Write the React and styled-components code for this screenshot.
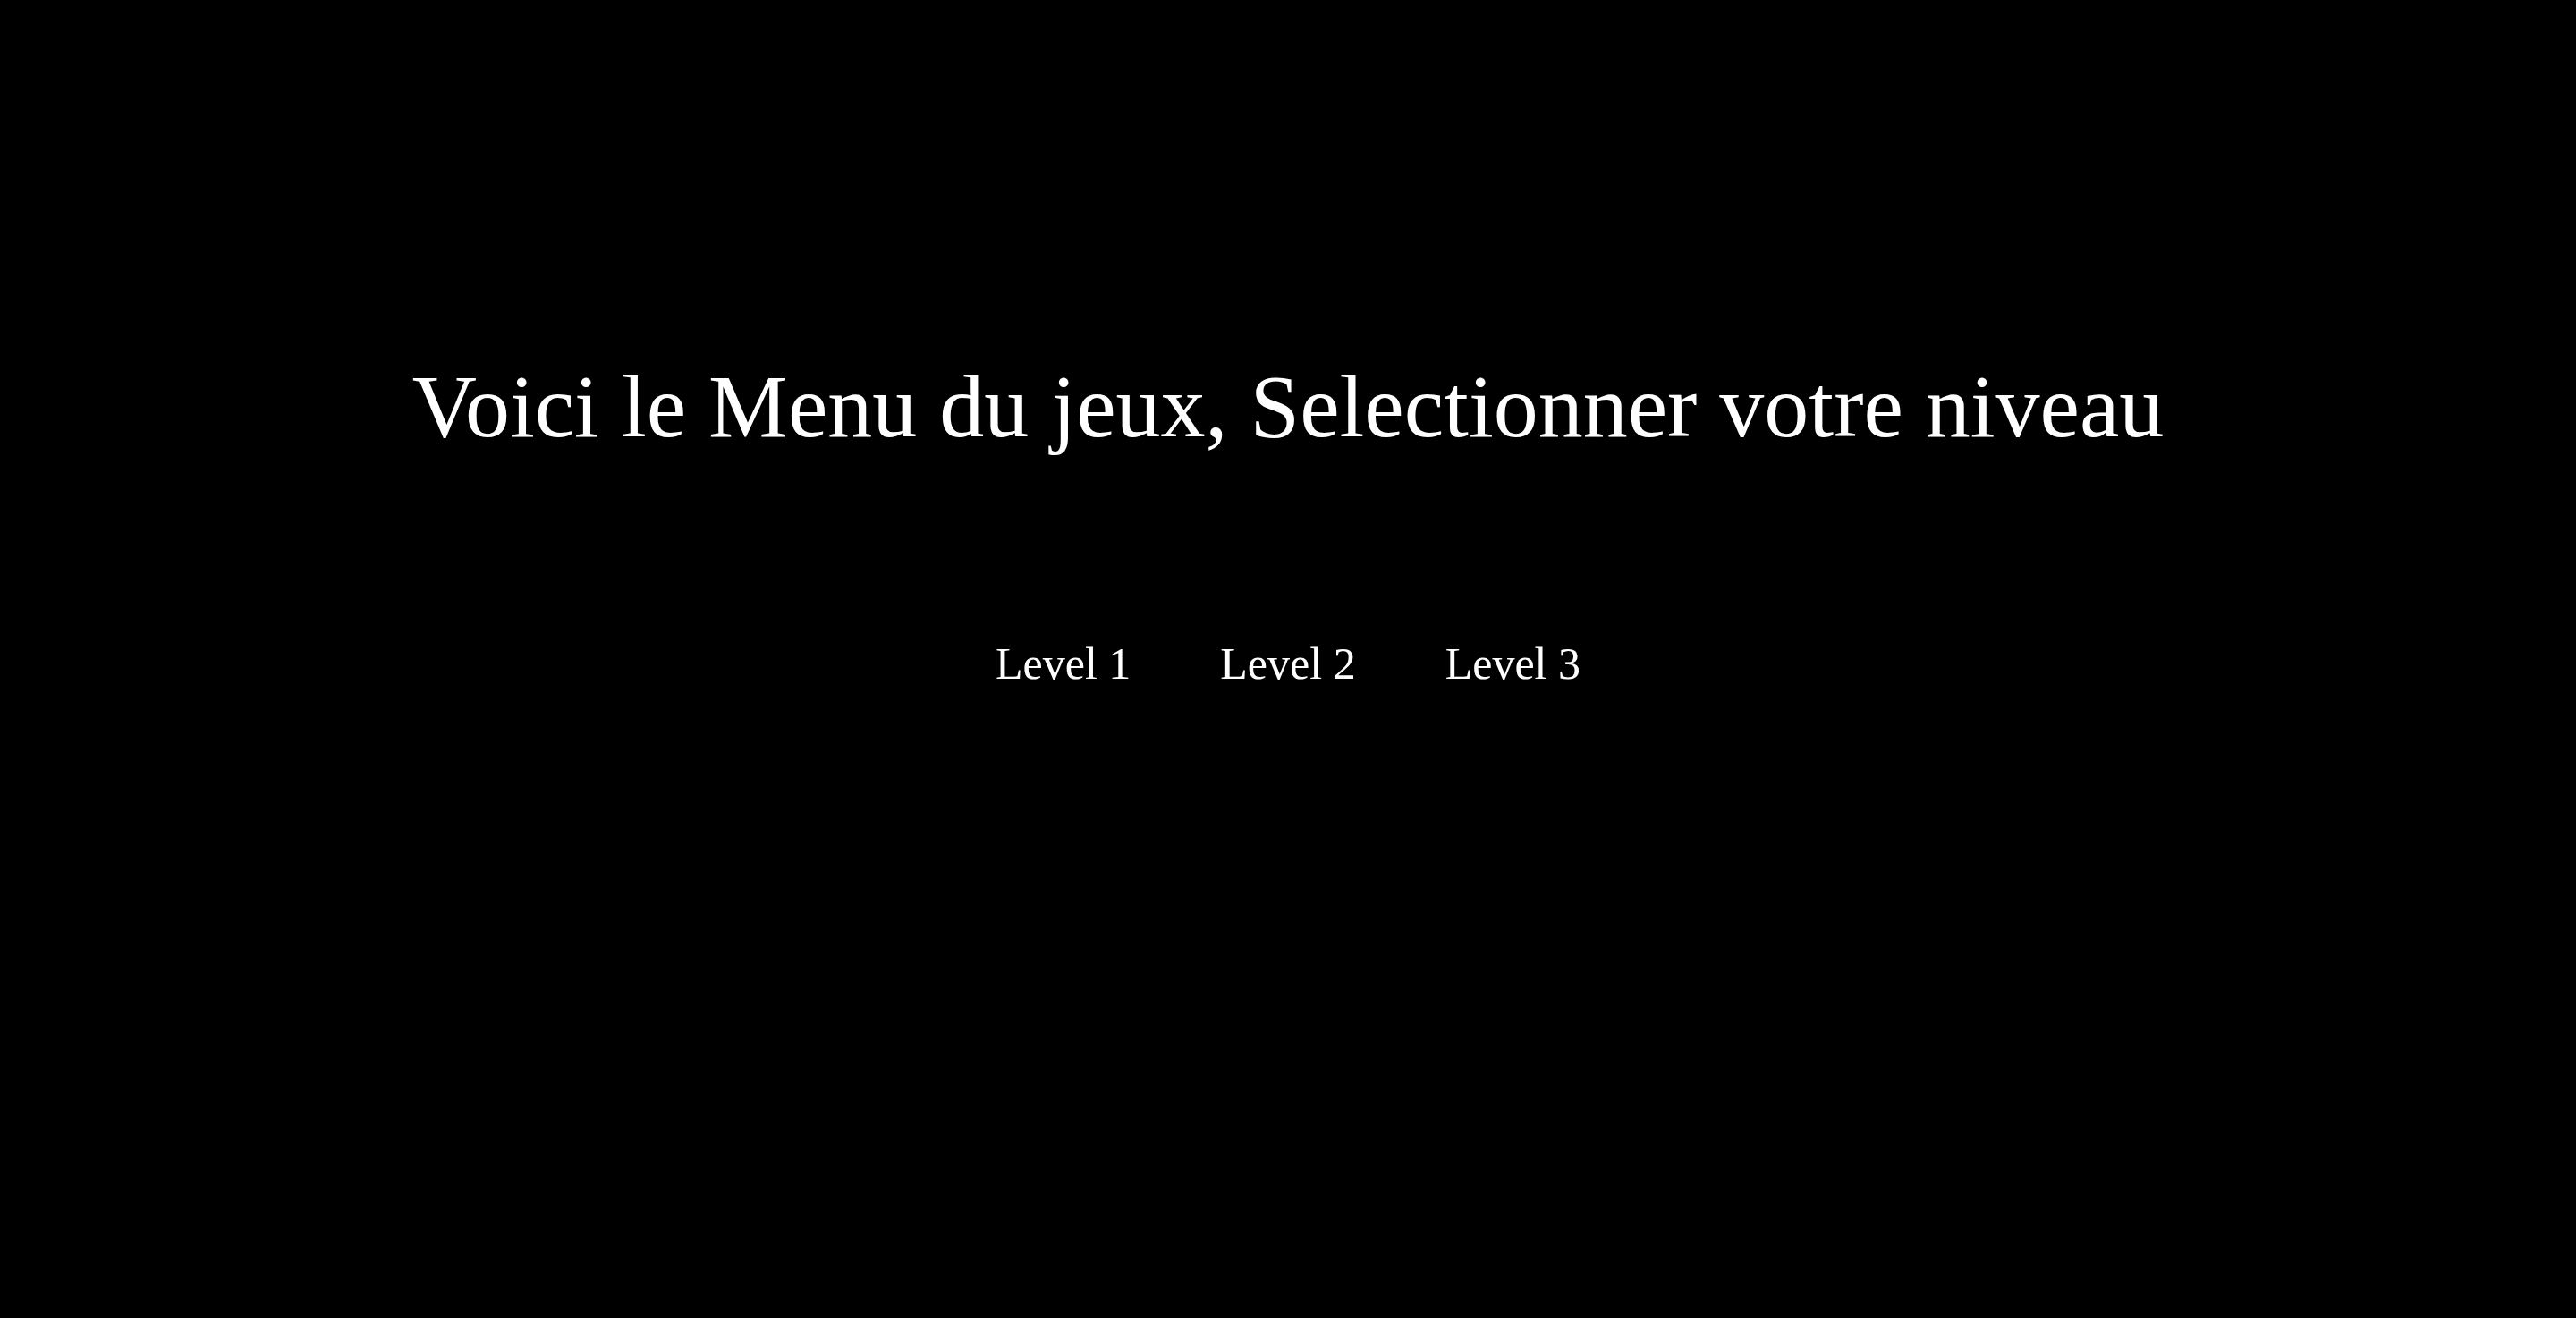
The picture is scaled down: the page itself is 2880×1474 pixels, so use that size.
import styled, { createGlobalStyle } from 'styled-components';

const GlobalStyle = createGlobalStyle`
  html, body {
    margin: 0;
    padding: 0;
    background: #000;
    color: #fff;
    font-family: 'Liberation Serif', 'Times New Roman', serif;
  }
`;

const Page = styled.div`
  min-height: 100vh;
  background: #000;
  display: flex;
  flex-direction: column;
  align-items: center;
`;

const Title = styled.h1`
  margin: 0;
  padding-top: 397px;
  font-size: 100px;
  font-weight: 400;
  line-height: 1.15;
`;

const LevelList = styled.ul`
  list-style: none;
  display: flex;
  gap: 100px;
  margin: 202px 0 0;
  padding: 0;
`;

const LevelItem = styled.li`
  font-size: 50px;
  line-height: 1.15;
  color: #fff;
  cursor: pointer;
`;

const levels = ['Level 1', 'Level 2', 'Level 3'];

const App = () => {
  return (
    <Page>
      <GlobalStyle />
      <Title>Voici le Menu du jeux, Selectionner votre niveau</Title>
      <LevelList>
        {levels.map((l) => (
          <LevelItem key={l}>{l}</LevelItem>
        ))}
      </LevelList>
    </Page>
  );
};

export default App;
